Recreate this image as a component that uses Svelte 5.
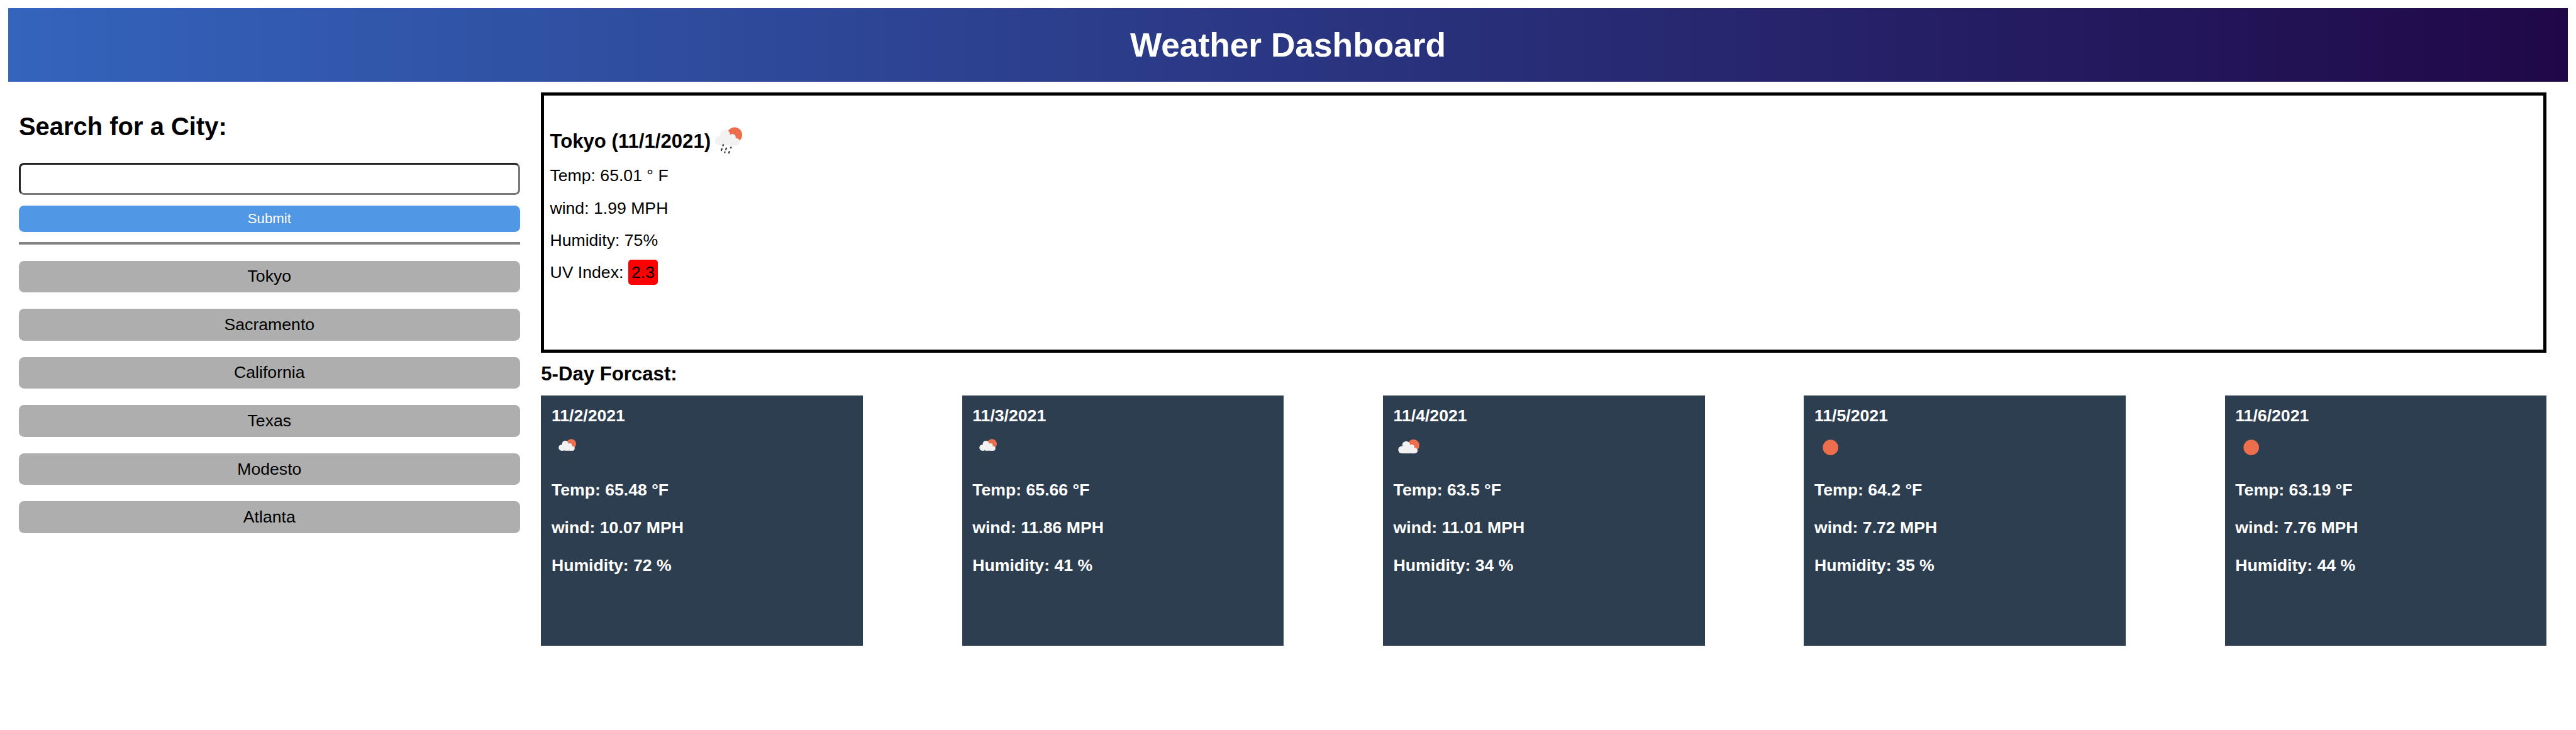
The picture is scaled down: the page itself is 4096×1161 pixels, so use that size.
<script>
  const cities = ['Tokyo', 'Sacramento', 'California', 'Texas', 'Modesto', 'Atlanta'];
  const days = [
    { date: '11/2/2021', icon: 'rain', temp: '65.48', wind: '10.07', humidity: '72' },
    { date: '11/3/2021', icon: 'rain', temp: '65.66', wind: '11.86', humidity: '41' },
    { date: '11/4/2021', icon: 'cloud', temp: '63.5', wind: '11.01', humidity: '34' },
    { date: '11/5/2021', icon: 'sun', temp: '64.2', wind: '7.72', humidity: '35' },
    { date: '11/6/2021', icon: 'sun', temp: '63.19', wind: '7.76', humidity: '44' }
  ];
</script>

{#snippet sunCloud()}
  <circle cx="164" cy="98.5" r="43.5" fill="#ec6e4c" />
  <g fill="#f2f2f2">
    <circle cx="78" cy="132" r="27" />
    <circle cx="110" cy="98" r="29" />
    <circle cx="152" cy="111.5" r="18.5" />
    <circle cx="174" cy="138.500" r="20.500" />
    <rect x="78" y="112" width="91" height="47" />
    <rect x="160" y="140" width="14" height="19" />
  </g>
{/snippet}

{#snippet drops()}
  <g stroke="#484848" stroke-width="9" stroke-linecap="round">
    <path d="M99 156 L97.500 160 M91 179 L88.500 187 M117 175 L114 183 M144 170 L142.500 173 M108.500 197 L107.500 199 M134 195 L131.500 202" />
  </g>
{/snippet}

<div class="page">
  <header><h1>Weather Dashboard</h1></header>
  <div class="layout">
    <aside>
      <h2>Search for a City:</h2>
      <input type="text" aria-label="City" />
      <button class="submit">Submit</button>
      <div class="rule"></div>
      <div class="cities">
        {#each cities as city}
          <button class="city">{city}</button>
        {/each}
      </div>
    </aside>
    <main>
      <section class="current">
        <h3>
          <span>Tokyo (11/1/2021)</span>
          <svg class="now" viewBox="45 50 168 162">
            {@render sunCloud()}
            {@render drops()}
          </svg>
        </h3>
        <p>Temp: 65.01 ° F</p>
        <p>wind: 1.99 MPH</p>
        <p>Humidity: 75%</p>
        <p>UV Index: <span class="uv">2.3</span></p>
      </section>
      <h3 class="title">5-Day Forcast:</h3>
      <section class="days">
        {#each days as day}
          <article>
            <p>{day.date}</p>
            <div class="icon">
              {#if day.icon === 'rain'}
                <svg viewBox="-18 -20 300 300">
                  {@render sunCloud()}
                  <g class="faint">{@render drops()}</g>
                </svg>
              {:else if day.icon === 'cloud'}
                <svg viewBox="8 -9 248 248">{@render sunCloud()}</svg>
              {:else}
                <svg viewBox="0 0 64 64"><circle cx="32" cy="32" r="14.800" fill="#ec6e4c" /></svg>
              {/if}
            </div>
            <p>Temp: {day.temp} °F</p>
            <p>wind: {day.wind} MPH</p>
            <p>Humidity: {day.humidity} %</p>
          </article>
        {/each}
      </section>
    </main>
  </div>
</div>

<style>
  :global(body) {
    background: #fff;
    overflow: hidden;
  }
  /* --u is the design unit: 1/4920 of the page width */
  .page {
    --u: calc(100vw / 4920);
    box-sizing: border-box;
    height: 100vh;
    padding: calc(var(--u) * 16);
    font-family: 'Liberation Sans', Arial, sans-serif;
    font-size: calc(var(--u) * 32);
    color: #000;
  }
  h1, h2, h3, p {
    margin: 0;
    white-space: nowrap;
  }
  header {
    display: flex;
    align-items: center;
    justify-content: center;
    height: calc(var(--u) * 140);
    background: linear-gradient(to right, #3464bc, #200848);
    color: #fff;
  }
  h1 {
    font-size: calc(var(--u) * 64);
    line-height: calc(var(--u) * 74);
  }
  .layout {
    display: flex;
    justify-content: space-between;
    padding: calc(var(--u) * 20) calc(var(--u) * 40) 0 calc(var(--u) * 20);
  }
  aside {
    display: flex;
    flex-direction: column;
    width: calc(var(--u) * 957);
  }
  h2 {
    margin-top: calc(var(--u) * 38);
    font-size: calc(var(--u) * 48);
    line-height: calc(var(--u) * 56);
  }
  input {
    box-sizing: border-box;
    height: calc(var(--u) * 62);
    margin: calc(var(--u) * 41) 0 calc(var(--u) * 20);
    padding: 0;
    border: 3px solid;
    border-color: #212121 #767676 #767676 #212121;
    border-radius: calc(var(--u) * 10);
    background: #fff;
  }
  button {
    padding: 0;
    border: 0;
    border-radius: calc(var(--u) * 10);
    font-family: inherit;
  }
  .submit {
    height: calc(var(--u) * 50);
    background: #5097e6;
    color: #fff;
    font-size: calc(var(--u) * 26.667);
  }
  .rule {
    height: calc(var(--u) * 4.500);
    margin-top: calc(var(--u) * 19.500);
    background: #828482;
  }
  .cities {
    display: grid;
    gap: calc(var(--u) * 31.200);
    margin-top: calc(var(--u) * 31);
  }
  .city {
    height: calc(var(--u) * 60.800);
    background: #aeaeae;
    color: #000;
    font-size: calc(var(--u) * 32);
  }
  main {
    width: calc(var(--u) * 3830.700);
  }
  .current {
    box-sizing: border-box;
    height: calc(var(--u) * 498);
    padding: calc(var(--u) * 57) calc(var(--u) * 11);
    border: 5px solid #000;
  }
  .current h3 {
    display: flex;
    align-items: center;
    height: calc(var(--u) * 62);
    margin-bottom: calc(var(--u) * 4.500);
    font-size: calc(var(--u) * 37.440);
  }
  .now {
    width: calc(var(--u) * 56);
    height: calc(var(--u) * 54);
    margin: 0 0 calc(var(--u) * 3) calc(var(--u) * 6);
  }
  .current p {
    line-height: calc(var(--u) * 61.500);
  }
  .uv {
    display: inline-block;
    padding: calc(var(--u) * 6) calc(var(--u) * 6.400);
    border-radius: calc(var(--u) * 6);
    background: #f00;
    line-height: calc(var(--u) * 36.500);
  }
  .title {
    margin: calc(var(--u) * 20) 0;
    font-size: calc(var(--u) * 37.440);
    line-height: calc(var(--u) * 42);
  }
  .days {
    display: flex;
    justify-content: space-between;
  }
  article {
    box-sizing: border-box;
    width: calc(var(--u) * 614.700);
    height: calc(var(--u) * 477.700);
    padding: calc(var(--u) * 3.500) calc(var(--u) * 20);
    background: #2d3e50;
    color: #fff;
    font-weight: bold;
  }
  article p {
    line-height: calc(var(--u) * 71.800);
  }
  .icon {
    height: calc(var(--u) * 70);
  }
  .icon svg {
    display: block;
    width: calc(var(--u) * 64);
    height: calc(var(--u) * 64);
    margin: calc(var(--u) * -8) 0 0 calc(var(--u) * -1.500);
  }
  article p:first-child {
    height: calc(var(--u) * 71.800);
  }
  .icon {
    display: flex;
    align-items: flex-start;
  }
  .faint {
    opacity: 0.7;
  }
</style>
